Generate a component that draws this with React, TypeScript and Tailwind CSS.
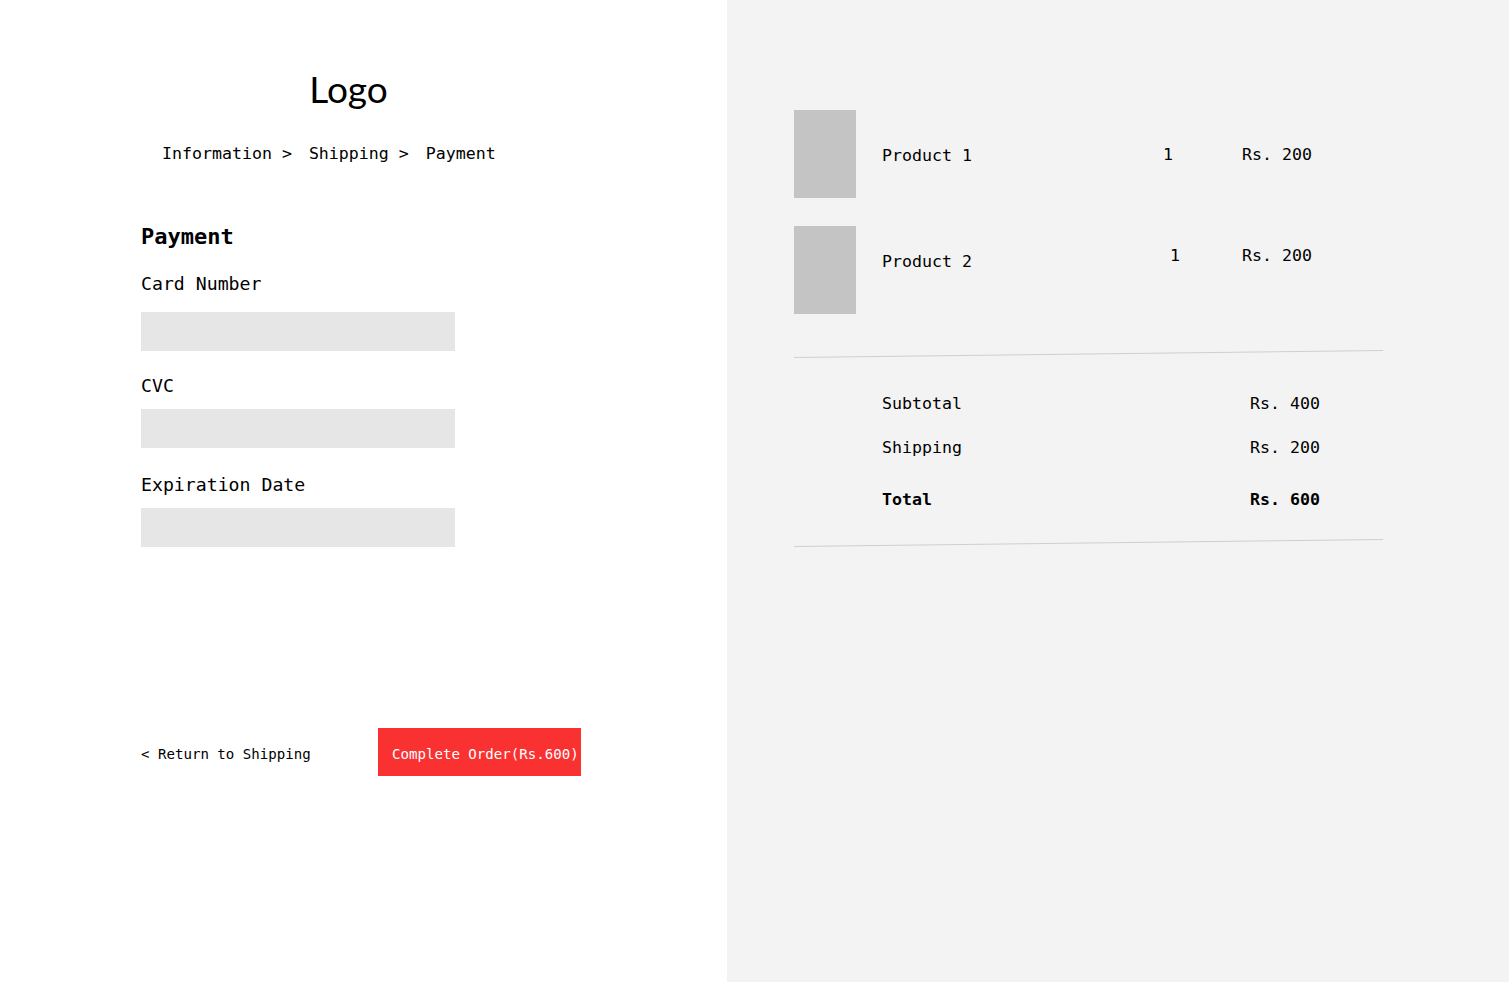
import React from "react";

const mono = "font-['DejaVu_Sans_Mono',monospace]";

function Divider() {
  return (
    <svg width="589" height="8" viewBox="0 0 589 8" className="block">
      <line x1="0" y1="7.5" x2="589" y2="0.5" stroke="#cfcfcf" strokeWidth="1" />
    </svg>
  );
}

export default function App() {
  return (
    <div className={`flex w-[1512px] h-[982px] bg-white text-black ${mono}`}>
      {/* Left panel */}
      <div className="w-[727px] h-full bg-white pl-[141px] flex flex-col">
        <div className="w-[415px] mt-[71px] text-center font-['Lato',sans-serif] text-[37px] leading-[36px]">
          Logo
        </div>
        <div className="mt-[37px] pl-[21px] flex gap-[17px] text-[16.6px] leading-[20px] whitespace-pre">
          <span>Information &gt;</span>
          <span>Shipping &gt;</span>
          <span>Payment</span>
        </div>
        <div className="mt-[61px] text-[22px] leading-[24px] font-bold">Payment</div>
        <div className="mt-[25px] text-[18.2px] leading-[20px]">Card Number</div>
        <div className="mt-[18px] w-[314px] h-[39px] bg-[#e6e6e6]" />
        <div className="mt-[25px] text-[18.2px] leading-[20px]">CVC</div>
        <div className="mt-[13px] w-[314px] h-[39px] bg-[#e6e6e6]" />
        <div className="mt-[27px] text-[18.2px] leading-[20px]">Expiration Date</div>
        <div className="mt-[13px] w-[314px] h-[39px] bg-[#e6e6e6]" />
        <div className="mt-[181px] flex items-center">
          <div className="w-[170px] pt-[3px] text-[14.1px] leading-[18px] whitespace-nowrap">
            &lt; Return to Shipping
          </div>
          <div className="ml-[67px] w-[203px] h-[48px] bg-[#f93131] text-white flex items-center pl-[14px] pt-[3px] text-[14.1px] leading-[18px] whitespace-nowrap">
            Complete Order(Rs.600)
          </div>
        </div>
      </div>

      {/* Right panel */}
      <div className="w-[782px] h-full bg-[#f3f3f3] pl-[67px] flex flex-col">
        <div className="mt-[110px] flex items-start h-[88px] text-[16.6px] leading-[20px]">
          <div className="w-[62px] h-[88px] bg-[#c4c4c4]" />
          <div className="ml-[26px] w-[281px] mt-[36px]">Product 1</div>
          <div className="w-[79px] mt-[35px]">1</div>
          <div className="mt-[35px] whitespace-pre">Rs. 200</div>
        </div>
        <div className="mt-[28px] flex items-start h-[88px] text-[16.6px] leading-[20px]">
          <div className="w-[62px] h-[88px] bg-[#c4c4c4]" />
          <div className="ml-[26px] w-[281px] mt-[26px]">Product 2</div>
          <div className="w-[79px] pl-[7px] mt-[20px]">1</div>
          <div className="mt-[20px] whitespace-pre">Rs. 200</div>
        </div>
        <div className="mt-[36px]">
          <Divider />
        </div>
        <div className="pl-[88px] text-[16.6px] leading-[20px]">
          <div className="mt-[36px] w-[438px] flex justify-between">
            <span>Subtotal</span>
            <span className="whitespace-pre">Rs. 400</span>
          </div>
          <div className="mt-[24px] w-[438px] flex justify-between">
            <span>Shipping</span>
            <span className="whitespace-pre">Rs. 200</span>
          </div>
          <div className="mt-[32px] w-[438px] flex justify-between font-bold">
            <span>Total</span>
            <span className="whitespace-pre">Rs. 600</span>
          </div>
        </div>
        <div className="mt-[29px]">
          <Divider />
        </div>
      </div>
      <div className="flex-1 bg-white" />
    </div>
  );
}
